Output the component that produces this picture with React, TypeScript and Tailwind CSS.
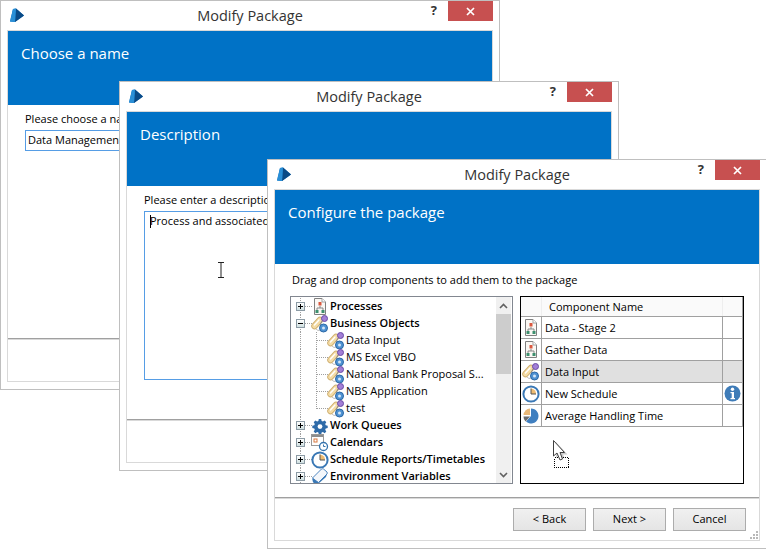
import React from "react";

const font = "font-['Open_Sans','Noto_Sans',sans-serif]";

const Logo = () => (
  <svg width="16" height="15" viewBox="0 0 16 15">
    <path d="M4 1 L7 0.5 L15 7.5 L6 14 L1 13.5 Z" fill="#0b6fc0" />
    <path d="M7 0.5 L15 7.5 L6 14 Z" fill="#0a4a86" />
    <path d="M4 1 L7 0.5 L6 14 L1 13.5 Z" fill="#2a8fd6" />
  </svg>
);

const ProcessIcon = () => (
  <svg width="16" height="17" viewBox="0 0 16 17">
    <path d="M2.5 0.5 H10 L13.5 4 V16.5 H2.5 Z" fill="#fbf8f4" stroke="#808080" />
    <path d="M10 0.5 V4 H13.5" fill="#fff" stroke="#a0a0a0" />
    <rect x="6.5" y="4" width="3" height="3.5" fill="#d9583f" />
    <path d="M8 8 V10 M5 12 V10 H11 V12" stroke="#888" fill="none" />
    <rect x="3.5" y="12" width="3" height="3" fill="#3d8f6f" />
    <rect x="9.5" y="12" width="3" height="3" fill="#3d8f6f" />
  </svg>
);

const ObjectIcon = () => (
  <svg width="18" height="18" viewBox="0 0 18 18">
    <path d="M3.5 11 L9 5" stroke="#cfae6e" strokeWidth="6.5" strokeLinecap="round" />
    <path d="M3.5 11 L9 5" stroke="#f4dca6" strokeWidth="4.8" strokeLinecap="round" />
    <path d="M3.5 10 L8 5" stroke="#fff" strokeWidth="1.3" strokeLinecap="round" />
    <path d="M11 6 L9 10 L10 11" stroke="#8a8a8a" fill="none" />
    <path d="M5 14 L7 15.5 L9 15" stroke="#c0c0c0" fill="none" />
    <circle cx="13.5" cy="3.5" r="3" fill="#a27fd6" stroke="#6a4aa6" />
    <circle cx="12.5" cy="13" r="4" fill="#4f92d2" stroke="#2b68a6" />
    <circle cx="12.5" cy="13" r="1.5" fill="#d5e7f7" />
  </svg>
);

const GearIcon = () => (
  <svg width="16" height="16" viewBox="0 0 16 16">
    <path
      d="M6.8 1h2.4l.4 2 1.3.6 1.8-1.1 1.6 1.7-1.1 1.7.5 1.3 2 .5v2.4l-2 .4-.5 1.3 1.1 1.8-1.6 1.6-1.8-1.1-1.3.5-.4 2H6.8l-.4-2-1.3-.5-1.7 1.1-1.7-1.6 1.1-1.8-.5-1.3-2-.4V7.7l2-.5.5-1.3L1.7 4.2l1.7-1.7 1.7 1.1 1.3-.6z"
      fill="#2f6ba8"
    />
    <circle cx="8" cy="8.6" r="2.4" fill="#fff" />
  </svg>
);

const CalendarIcon = () => (
  <svg width="18" height="18" viewBox="0 0 18 18">
    <rect x="0.5" y="0.5" width="12" height="11" fill="#fff" stroke="#999" />
    <rect x="1" y="1" width="11" height="2" fill="#8d8d8d" />
    <rect x="3" y="5" width="3" height="3" fill="none" stroke="#d9793f" />
    <circle cx="12.5" cy="12.5" r="4" fill="#fff" stroke="#3573ad" strokeWidth="1.3" />
    <path d="M12.5 10.5 V12.5 H14.5" stroke="#3573ad" fill="none" />
  </svg>
);

const ClockIcon = () => (
  <svg width="18" height="18" viewBox="0 0 18 18">
    <circle cx="9" cy="9" r="7.6" fill="#fff" stroke="#3a78b5" strokeWidth="2" />
    <path d="M9 3.5 V9 H14 A5 5 0 0 0 9 3.5 Z" fill="#eebc73" />
    <path d="M9 3.5 V9 H14" stroke="#555" fill="none" />
  </svg>
);

const EnvIcon = () => (
  <svg width="18" height="17" viewBox="0 0 18 17">
    <path d="M1.5 10 L10.5 1 Q11.5 0.5 12.5 1 L16 4 Q16.5 5 16 6 L7.5 14.5 L4 12 Z" fill="#f4f7fb" stroke="#4f86c0" />
    <path d="M1.5 10 L7.5 14.5 L6.5 16 L3 15.5 Q1 13 1.5 10 Z" fill="#3a78b5" />
    <path d="M7.5 14.5 L16 6 L15 9 L7 16 Z" fill="#3a78b5" />
  </svg>
);

const PieIcon = () => (
  <svg width="16" height="16" viewBox="0 0 16 16">
    <path d="M8 0.5 A7.5 7.5 0 1 1 3 13.6 L8 8 Z" fill="#3f7fc0" />
    <path d="M7 0.5 V7 H0.5 A7 7 0 0 1 7 0.5 Z" fill="#e8b878" />
    <path d="M0.5 8.5 H7 L2.5 13.5 A7 7 0 0 1 0.5 8.5 Z" fill="#6b6b6b" />
  </svg>
);

const InfoIcon = () => (
  <svg width="17" height="17" viewBox="0 0 17 17">
    <circle cx="8.5" cy="8.5" r="8" fill="#3f7cb8" />
    <circle cx="8.5" cy="4.2" r="1.7" fill="#fff" />
    <path d="M6.5 7 H10 V13 H11 V14.2 H6.5 V13 H7.7 V8.2 H6.5 Z" fill="#fff" />
  </svg>
);

const Expander = ({ open }: { open?: boolean }) => (
  <span className="relative flex h-[9px] w-[9px] items-center justify-center border border-[#8c9ba5] bg-gradient-to-b from-white to-[#cfdfe0]">
    <span className="h-px w-[5px] bg-black" />
    {!open && <span className="absolute h-[5px] w-px bg-black" />}
  </span>
);

type TreeRowProps = {
  label: string;
  icon: React.ReactNode;
  open?: boolean;
  child?: boolean;
  last?: boolean;
};

const TreeRow = ({ label, icon, open, child, last }: TreeRowProps) => (
  <div className="relative flex h-[17px] items-center">
    <span className="absolute left-[9px] top-0 h-full border-l border-dotted border-[#a0a0a0]" />
    {child ? (
      <>
        <span className={`absolute left-[25px] top-0 border-l border-dotted border-[#a0a0a0] ${last ? "h-[9px]" : "h-full"}`} />
        <span className="absolute left-[25px] top-[8px] w-[12px] border-t border-dotted border-[#a0a0a0]" />
      </>
    ) : (
      <>
        <span className="absolute left-[9px] top-[8px] w-[12px] border-t border-dotted border-[#a0a0a0]" />
        <span className="absolute left-[5px] top-[4px]">
          <Expander open={open} />
        </span>
      </>
    )}
    <span className={`relative flex h-[17px] w-[18px] shrink-0 items-center justify-center ${child ? "ml-[36px]" : "ml-[20px]"}`}>{icon}</span>
    <span className={`ml-px whitespace-nowrap text-[11px] text-black ${child ? "" : "font-semibold"}`}>{label}</span>
  </div>
);

const Tree = () => (
  <div className="relative h-[188px] w-[223px] overflow-hidden border border-[#828790] bg-white pt-px">
    <TreeRow label="Processes" icon={<ProcessIcon />} />
    <TreeRow label="Business Objects" icon={<ObjectIcon />} open />
    <TreeRow label="Data Input" icon={<ObjectIcon />} child />
    <TreeRow label="MS Excel VBO" icon={<ObjectIcon />} child />
    <TreeRow label="National Bank Proposal S..." icon={<ObjectIcon />} child />
    <TreeRow label="NBS Application" icon={<ObjectIcon />} child />
    <TreeRow label="test" icon={<ObjectIcon />} child last />
    <TreeRow label="Work Queues" icon={<GearIcon />} />
    <TreeRow label="Calendars" icon={<CalendarIcon />} />
    <TreeRow label="Schedule Reports/Timetables" icon={<ClockIcon />} />
    <TreeRow label="Environment Variables" icon={<EnvIcon />} />
    {/* scrollbar sits over the tree rows */}
    <div className="absolute bottom-0 right-[1px] top-0 flex w-[15px] flex-col bg-[#f0f0f0]">
      <div className="flex h-[17px] items-center justify-center">
        <svg width="9" height="6" viewBox="0 0 9 6"><path d="M1 5 L4.5 1.5 L8 5" stroke="#606060" strokeWidth="1.6" fill="none" /></svg>
      </div>
      <div className="h-[60px] bg-[#cdcdcd]" />
      <div className="flex-1" />
      <div className="flex h-[17px] items-center justify-center">
        <svg width="9" height="6" viewBox="0 0 9 6"><path d="M1 1 L4.5 4.5 L8 1" stroke="#606060" strokeWidth="1.6" fill="none" /></svg>
      </div>
    </div>
  </div>
);

const rows: { name: string; icon: React.ReactNode; selected?: boolean; info?: boolean }[] = [
  { name: "Data - Stage 2", icon: <ProcessIcon /> },
  { name: "Gather Data", icon: <ProcessIcon /> },
  { name: "Data Input", icon: <ObjectIcon />, selected: true },
  { name: "New Schedule", icon: <ClockIcon />, info: true },
  { name: "Average Handling Time", icon: <PieIcon /> },
];

const ComponentTable = () => (
  <div className="relative h-[188px] w-[224px] border border-black bg-white">
    <div className="flex h-[20px] border-b border-[#a0a0a0] bg-[#fafafa] pr-px">
      <div className="w-[21px] border-r border-[#eeeeee]" />
      <div className="flex-1 pl-[7px] text-[11px] leading-[20px] text-black">Component Name</div>
      <div className="w-[20px] border-l border-[#eeeeee]" />
    </div>
    {rows.map((row) => (
      <div key={row.name} className="flex h-[22px] border-b border-[#a0a0a0] pr-px">
        <div className="flex w-[21px] items-center justify-center border-r border-[#a0a0a0]">{row.icon}</div>
        <div className={`flex flex-1 items-center pl-[3px] pt-px text-[11px] text-black ${row.selected ? "bg-[#e0e0e0]" : ""}`}>{row.name}</div>
        <div className={`flex w-[20px] items-center justify-center border-l border-[#a0a0a0] ${row.selected ? "bg-[#e0e0e0]" : ""}`}>
          {row.info && <InfoIcon />}
        </div>
      </div>
    ))}
    <div className="absolute bottom-[56px] right-0 top-0 w-px bg-[#a0a0a0]" />
    {/* drag cursor */}
    <svg className="absolute left-[31px] top-[142px]" width="22" height="30" viewBox="0 0 22 30">
      <path d="M4 3 V19 L7.5 16 L11 23 L14 22 L11 15.5 L15.5 15.5 Z" fill="#000" opacity="0.2" />
      <rect x="2.5" y="18.5" width="14" height="10" fill="#fff" stroke="#000" strokeDasharray="1 1" shapeRendering="crispEdges" />
      <path d="M1.5 1.5 V17 L5 14 L8 21 L10.5 20 L8 13.5 L12.5 13.5 Z" fill="#fff" stroke="#404040" />
    </svg>
  </div>
);

const Button = ({ children }: { children: React.ReactNode }) => (
  <div className="flex h-[23px] w-[73px] items-center justify-center border border-[#acacac] bg-gradient-to-b from-[#f0f0f0] to-[#e5e5e5] text-[11px] text-black">
    {children}
  </div>
);

const Grip = () => (
  <svg className="absolute bottom-[1px] right-[1px]" width="9" height="9" viewBox="0 0 9 9">
    <path d="M7 1h2v2H7zM4 4h2v2H4zM7 4h2v2H7zM1 7h2v2H1zM4 7h2v2H4zM7 7h2v2H7z" fill="#b8b8b8" />
  </svg>
);

type WindowProps = {
  title: string;
  className: string;
  children: React.ReactNode;
  buttons?: React.ReactNode;
};

const DialogWindow = ({ title, className, children, buttons }: WindowProps) => (
  <div className={`absolute h-[390px] w-[500px] border border-[#bfbfbf] bg-white ${className}`}>
    <div className="relative flex h-[29px] items-center justify-center">
      <span className="absolute left-[8px] top-[7px]"><Logo /></span>
      <span className="text-[14.5px] text-[#333]">Modify Package</span>
      <span className="absolute right-[62px] top-0 text-[13px] font-bold leading-[18px] text-[#333]">?</span>
      <span className="absolute right-[6px] top-0 flex h-[20px] w-[45px] items-center justify-center bg-[#c75050]">
        <svg width="9" height="9" viewBox="0 0 9 9"><path d="M1 1 L8 8 M8 1 L1 8" stroke="#fff" strokeWidth="1.7" /></svg>
      </span>
    </div>
    <div className="relative mx-[6px] flex h-[352px] flex-col border border-[#d9d9d9]">
      <div className="h-[74px] bg-[#0072c6] pl-[13px] pt-[11px] text-[15px] leading-[22px] text-white">{title}</div>
      <div className="h-[234px] border-b border-b-[#a0a0a0]">{children}</div>
      <div className="relative flex flex-1 justify-end gap-[7px] border-t border-t-[#d9d9d9] pr-[13px] pt-[9px]">{buttons}</div>
    </div>
  </div>
);

const App: React.FC = () => {
  return (
    <div className={`relative h-[549px] w-[766px] overflow-hidden bg-white ${font}`}>
      <DialogWindow title="Choose a name" className="left-0 top-0">
        <div className="px-[17px] pt-[6px]">
          <p className="text-[11px] leading-[16px] text-black">Please choose a name</p>
          <div className="mt-[3px] flex h-[21px] w-[420px] items-center border border-[#569de5] pl-[2px] text-[11px] text-black">
            Data Management
          </div>
        </div>
      </DialogWindow>

      <DialogWindow title="Description" className="left-[119px] top-[81px]">
        <div className="px-[17px] pt-[6px]">
          <p className="text-[11px] leading-[16px] text-black">Please enter a description</p>
          <div className="relative mt-[3px] h-[169px] w-[420px] border border-[#569de5] pl-[5px] pt-px text-[11px] leading-[15px] text-black">
            <span className="absolute left-[5px] top-[3px] h-[13px] w-px bg-black" />
            Process and associated
            <svg className="absolute left-[72px] top-[50px]" width="8" height="16" viewBox="0 0 8 16">
              <path d="M1 0.5 H7 M4 0.5 V15.5 M1 15.5 H7" stroke="#222" fill="none" />
            </svg>
          </div>
        </div>
      </DialogWindow>

      <DialogWindow
        title="Configure the package"
        className="left-[267px] top-[159px]"
        buttons={
          <>
            <Button>&lt; Back</Button>
            <Button>Next &gt;</Button>
            <Button>Cancel</Button>
            <Grip />
          </>
        }
      >
        <div className="pl-[15px] pt-[8px]">
          <p className="pl-[2px] text-[11px] leading-[16px] text-black">Drag and drop components to add them to the package</p>
          <div className="mt-[8px] flex gap-[7px]">
            <Tree />
            <ComponentTable />
          </div>
        </div>
      </DialogWindow>
    </div>
  );
};

export default App;
